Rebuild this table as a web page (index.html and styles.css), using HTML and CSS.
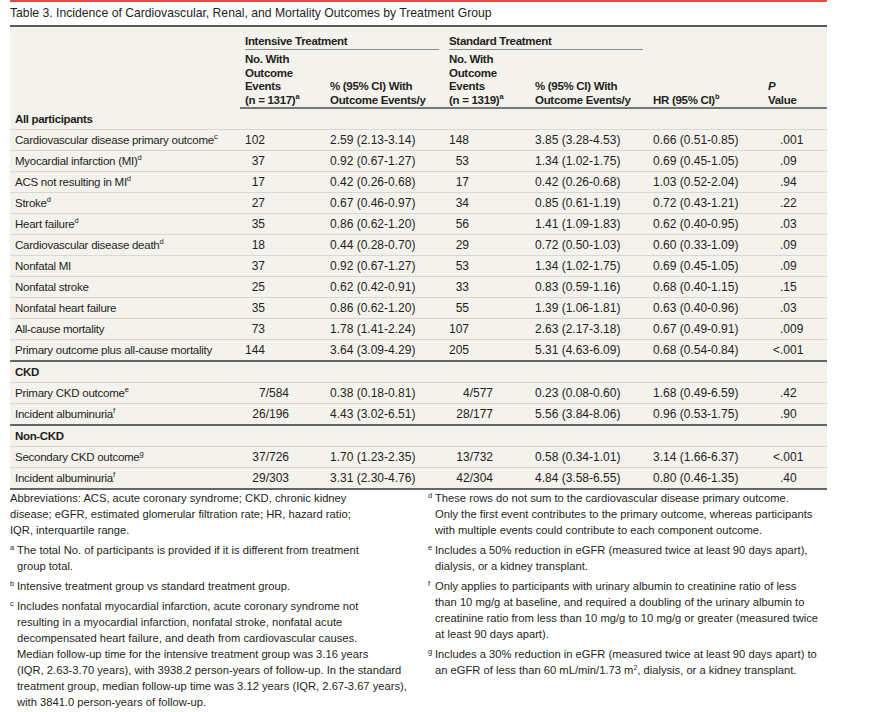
FILE: index.html
```html
<!DOCTYPE html>
<html>
<head>
<meta charset="utf-8">
<link rel="stylesheet" href="styles.css">
</head>
<body>
<div class="page">
  <div class="title">Table 3. Incidence of Cardiovascular, Renal, and Mortality Outcomes by Treatment Group</div>
  <table class="tbl">
    <colgroup>
      <col class="c1"><col class="c2"><col class="c3"><col class="c4"><col class="c5"><col class="c6"><col class="c7">
    </colgroup>
    <thead>
      <tr class="h1">
        <th rowspan="2"></th>
        <th colspan="2" class="grp"><div class="grp-in grp-a">Intensive Treatment</div></th>
        <th colspan="2" class="grp"><div class="grp-in grp-b">Standard Treatment</div></th>
        <th rowspan="2" class="sub">HR (95% CI)<sup>b</sup></th>
        <th rowspan="2" class="sub"><i>P</i><br>Value</th>
      </tr>
      <tr class="h2">
        <th class="sub">No. With<br>Outcome<br>Events<br>(n = 1317)<sup>a</sup></th>
        <th class="sub">% (95% CI) With<br>Outcome Events/y</th>
        <th class="sub">No. With<br>Outcome<br>Events<br>(n = 1319)<sup>a</sup></th>
        <th class="sub">% (95% CI) With<br>Outcome Events/y</th>
      </tr>
    </thead>
    <tbody>
      <tr class="sec"><td>All participants</td><td></td><td></td><td></td><td></td><td></td><td></td></tr>
      <tr><td class="lbl">Cardiovascular disease primary outcome<sup>c</sup></td><td><span class="n">102</span></td><td class="v">2.59 (2.13-3.14)</td><td><span class="n">148</span></td><td class="v">3.85 (3.28-4.53)</td><td class="v">0.66 (0.51-0.85)</td><td class="p">.001</td></tr>
      <tr><td class="lbl">Myocardial infarction (MI)<sup>d</sup></td><td><span class="n">37</span></td><td class="v">0.92 (0.67-1.27)</td><td><span class="n">53</span></td><td class="v">1.34 (1.02-1.75)</td><td class="v">0.69 (0.45-1.05)</td><td class="p">.09</td></tr>
      <tr><td class="lbl">ACS not resulting in MI<sup>d</sup></td><td><span class="n">17</span></td><td class="v">0.42 (0.26-0.68)</td><td><span class="n">17</span></td><td class="v">0.42 (0.26-0.68)</td><td class="v">1.03 (0.52-2.04)</td><td class="p">.94</td></tr>
      <tr><td class="lbl">Stroke<sup>d</sup></td><td><span class="n">27</span></td><td class="v">0.67 (0.46-0.97)</td><td><span class="n">34</span></td><td class="v">0.85 (0.61-1.19)</td><td class="v">0.72 (0.43-1.21)</td><td class="p">.22</td></tr>
      <tr><td class="lbl">Heart failure<sup>d</sup></td><td><span class="n">35</span></td><td class="v">0.86 (0.62-1.20)</td><td><span class="n">56</span></td><td class="v">1.41 (1.09-1.83)</td><td class="v">0.62 (0.40-0.95)</td><td class="p">.03</td></tr>
      <tr><td class="lbl">Cardiovascular disease death<sup>d</sup></td><td><span class="n">18</span></td><td class="v">0.44 (0.28-0.70)</td><td><span class="n">29</span></td><td class="v">0.72 (0.50-1.03)</td><td class="v">0.60 (0.33-1.09)</td><td class="p">.09</td></tr>
      <tr><td class="lbl">Nonfatal MI</td><td><span class="n">37</span></td><td class="v">0.92 (0.67-1.27)</td><td><span class="n">53</span></td><td class="v">1.34 (1.02-1.75)</td><td class="v">0.69 (0.45-1.05)</td><td class="p">.09</td></tr>
      <tr><td class="lbl">Nonfatal stroke</td><td><span class="n">25</span></td><td class="v">0.62 (0.42-0.91)</td><td><span class="n">33</span></td><td class="v">0.83 (0.59-1.16)</td><td class="v">0.68 (0.40-1.15)</td><td class="p">.15</td></tr>
      <tr><td class="lbl">Nonfatal heart failure</td><td><span class="n">35</span></td><td class="v">0.86 (0.62-1.20)</td><td><span class="n">55</span></td><td class="v">1.39 (1.06-1.81)</td><td class="v">0.63 (0.40-0.96)</td><td class="p">.03</td></tr>
      <tr><td class="lbl">All-cause mortality</td><td><span class="n">73</span></td><td class="v">1.78 (1.41-2.24)</td><td><span class="n">107</span></td><td class="v">2.63 (2.17-3.18)</td><td class="v">0.67 (0.49-0.91)</td><td class="p">.009</td></tr>
      <tr class="last"><td class="lbl">Primary outcome plus all-cause mortality</td><td><span class="n">144</span></td><td class="v">3.64 (3.09-4.29)</td><td><span class="n">205</span></td><td class="v">5.31 (4.63-6.09)</td><td class="v">0.68 (0.54-0.84)</td><td class="p"><span class="lt">&lt;</span>.001</td></tr>
      <tr class="sec"><td>CKD</td><td></td><td></td><td></td><td></td><td></td><td></td></tr>
      <tr><td class="lbl">Primary CKD outcome<sup>e</sup></td><td><span class="nf">7/584</span></td><td class="v">0.38 (0.18-0.81)</td><td><span class="nf">4/577</span></td><td class="v">0.23 (0.08-0.60)</td><td class="v">1.68 (0.49-6.59)</td><td class="p">.42</td></tr>
      <tr class="last"><td class="lbl">Incident albuminuria<sup>f</sup></td><td><span class="nf">26/196</span></td><td class="v">4.43 (3.02-6.51)</td><td><span class="nf">28/177</span></td><td class="v">5.56 (3.84-8.06)</td><td class="v">0.96 (0.53-1.75)</td><td class="p">.90</td></tr>
      <tr class="sec"><td>Non-CKD</td><td></td><td></td><td></td><td></td><td></td><td></td></tr>
      <tr><td class="lbl">Secondary CKD outcome<sup>g</sup></td><td><span class="nf">37/726</span></td><td class="v">1.70 (1.23-2.35)</td><td><span class="nf">13/732</span></td><td class="v">0.58 (0.34-1.01)</td><td class="v">3.14 (1.66-6.37)</td><td class="p"><span class="lt">&lt;</span>.001</td></tr>
      <tr class="last"><td class="lbl">Incident albuminuria<sup>f</sup></td><td><span class="nf">29/303</span></td><td class="v">3.31 (2.30-4.76)</td><td><span class="nf">42/304</span></td><td class="v">4.84 (3.58-6.55)</td><td class="v">0.80 (0.46-1.35)</td><td class="p">.40</td></tr>
    </tbody>
  </table>
  <div class="notes">
    <div class="col">
      <p class="fn plain">Abbreviations: ACS, acute coronary syndrome; CKD, chronic kidney<br>disease; eGFR, estimated glomerular filtration rate; HR, hazard ratio;<br>IQR, interquartile range.</p>
      <p class="fn"><sup class="mk">a</sup>The total No. of participants is provided if it is different from treatment<br>group total.</p>
      <p class="fn"><sup class="mk">b</sup>Intensive treatment group vs standard treatment group.</p>
      <p class="fn"><sup class="mk">c</sup>Includes nonfatal myocardial infarction, acute coronary syndrome not<br>resulting in a myocardial infarction, nonfatal stroke, nonfatal acute<br>decompensated heart failure, and death from cardiovascular causes.<br>Median follow-up time for the intensive treatment group was 3.16 years<br>(IQR, 2.63-3.70 years), with 3938.2 person-years of follow-up. In the standard<br>treatment group, median follow-up time was 3.12 years (IQR, 2.67-3.67 years),<br>with 3841.0 person-years of follow-up.</p>
    </div>
    <div class="col">
      <p class="fn"><sup class="mk">d</sup>These rows do not sum to the cardiovascular disease primary outcome.<br>Only the first event contributes to the primary outcome, whereas participants<br>with multiple events could contribute to each component outcome.</p>
      <p class="fn"><sup class="mk">e</sup>Includes a 50% reduction in eGFR (measured twice at least 90 days apart),<br>dialysis, or a kidney transplant.</p>
      <p class="fn"><sup class="mk">f</sup>Only applies to participants with urinary albumin to creatinine ratio of less<br>than 10 mg/g at baseline, and required a doubling of the urinary albumin to<br>creatinine ratio from less than 10 mg/g to 10 mg/g or greater (measured twice<br>at least 90 days apart).</p>
      <p class="fn"><sup class="mk">g</sup>Includes a 30% reduction in eGFR (measured twice at least 90 days apart) to<br>an eGFR of less than 60 mL/min/1.73 m<sup class="pw">2</sup>, dialysis, or a kidney transplant.</p>
    </div>
  </div>
</div>
</body>
</html>
```

FILE: styles.css
```css
html, body {
  margin: 0;
  padding: 0;
  background: #ffffff;
}

.page {
  width: 817px;
  margin-left: 10px;
  color: #231f20;
  font-family: "Liberation Sans", Arial, sans-serif;
}

.title {
  border-top: 2px solid #e04a3f;
  border-bottom: 2px solid #5a5a5a;
  font-size: 12.2px;
  line-height: 23px;
  height: 23px;
  white-space: nowrap;
}

.tbl {
  width: 817px;
  border-collapse: collapse;
  background: #f4f2ed;
  table-layout: fixed;
}

.c1 { width: 230px; }
.c2 { width: 85px; }
.c3 { width: 119px; }
.c4 { width: 86px; }
.c5 { width: 118px; }
.c6 { width: 115px; }
.c7 { width: 64px; }

.tbl th {
  font-weight: bold;
  font-size: 11.5px;
  letter-spacing: -0.3px;
  text-align: left;
  padding: 0 0 0 5px;
  vertical-align: bottom;
  white-space: nowrap;
}

.tbl thead tr.h2 th,
.tbl thead th.sub {
  line-height: 13.5px;
  padding-bottom: 0;
  border-bottom: 2px solid #777;
}

.tbl thead tr.h1 th.grp {
  padding: 0 5px 0 5px;
  vertical-align: top;
}

.grp-in {
  padding-top: 6px;
  line-height: 16px;
  border-bottom: 1px solid #8a8a8a;
  margin-bottom: 3px;
}

.tbl sup {
  font-size: 7.5px;
  line-height: 0;
  vertical-align: 5px;
  letter-spacing: 0;
}

.tbl td {
  height: 20px;
  line-height: 20px;
  padding: 0 0 0 5px;
  font-size: 11.5px;
  letter-spacing: -0.25px;
  white-space: nowrap;
  border-bottom: 1px solid #d9d7d1;
}

.tbl tr.sec td {
  font-weight: bold;
  letter-spacing: -0.35px;
}

.tbl tr.last td {
  border-bottom: 2px solid #666;
}

.tbl td.v, .tbl td .n, .tbl td .nf, .tbl td.p {
  font-size: 12px;
  letter-spacing: 0;
}

.n {
  display: inline-block;
  width: 20px;
  text-align: right;
}

.nf {
  display: inline-block;
  width: 44px;
  text-align: right;
}

.tbl td.p {
  padding-left: 17px;
}

.lt {
  margin-left: -7px;
}

.notes {
  display: grid;
  grid-template-columns: 418px 399px;
  padding-top: 0;
  font-size: 11.2px;
  line-height: 16px;
}

.fn {
  margin: 0 0 4px 0;
  padding-left: 7px;
  position: relative;
  white-space: nowrap;
}

.fn.plain {
  padding-left: 0;
}

.mk {
  position: absolute;
  left: 0;
  top: 0;
  font-size: 7.5px;
  line-height: 12px;
  vertical-align: baseline;
}

.pw {
  font-size: 7px;
  line-height: 0;
  vertical-align: 4px;
}
```
